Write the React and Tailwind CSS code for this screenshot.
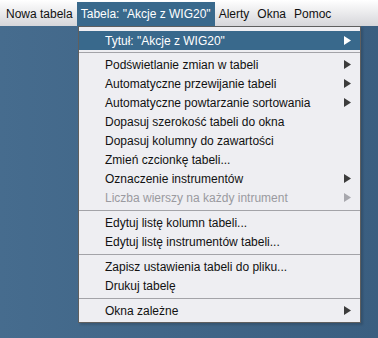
import React from 'react';

const MENU = [
  { label: 'Nowa tabela' },
  { label: 'Tabela: "Akcje z WIG20"', active: true },
  { label: 'Alerty' },
  { label: 'Okna' },
  { label: 'Pomoc' },
];

const ITEMS = [
  { label: 'Tytuł: "Akcje z WIG20"', sub: true, selected: true },
  { sep: true, first: true },
  { label: 'Podświetlanie zmian w tabeli', sub: true },
  { label: 'Automatyczne przewijanie tabeli', sub: true },
  { label: 'Automatyczne powtarzanie sortowania', sub: true },
  { label: 'Dopasuj szerokość tabeli do okna' },
  { label: 'Dopasuj kolumny do zawartości' },
  { label: 'Zmień czcionkę tabeli...' },
  { label: 'Oznaczenie instrumentów', sub: true },
  { label: 'Liczba wierszy na każdy intrument', sub: true, disabled: true },
  { sep: true },
  { label: 'Edytuj listę kolumn tabeli...' },
  { label: 'Edytuj listę instrumentów tabeli...' },
  { sep: true },
  { label: 'Zapisz ustawienia tabeli do pliku...' },
  { label: 'Drukuj tabelę' },
  { sep: true },
  { label: 'Okna zależne', sub: true },
];

function Arrow({ color }) {
  return (
    <svg width="7" height="9" viewBox="0 0 7 9" className="shrink-0">
      <path d="M0 0 L7 4.5 L0 9 Z" fill={color} />
    </svg>
  );
}

export default function App() {
  return (
    <div
      className="relative h-[338px] w-[378px] overflow-hidden text-[12px]"
      style={{ fontFamily: '"Liberation Sans", Arial, sans-serif' }}
    >
      <div className="flex h-[26px] items-end bg-gradient-to-b from-white to-[#d6d6da] pl-[2px]">
        {MENU.map((m) => (
          <div
            key={m.label}
            className={`flex h-[24px] items-center px-1 ${
              m.active ? 'bg-[#39698c] text-white' : 'text-[#111]'
            }`}
          >
            {m.label}
          </div>
        ))}
      </div>
      <div className="h-[312px] bg-gradient-to-r from-[#466c8e] to-[#3a5e80]" />

      <div className="absolute left-[78px] top-[26px] w-[283px] border border-[#5f5f5f] bg-[#eeeef2] pt-[4px] pb-[2px] shadow-[2px_2px_2px_rgba(0,0,0,0.15)]">
        {ITEMS.map((it, i) =>
          it.sep ? (
            <div
              key={i}
              className={`flex items-center ${it.first ? 'h-[5px]' : 'h-[6px]'}`}
            >
              <div className="h-px w-full bg-[#a3a3a8]" />
            </div>
          ) : (
            <div
              key={i}
              className={`flex h-[19px] items-center justify-between pl-[26px] pr-[9px] ${
                it.selected
                  ? 'bg-[#39698c] text-white'
                  : it.disabled
                  ? 'text-[#9a9aa0]'
                  : 'text-[#111]'
              }`}
            >
              <span>{it.label}</span>
              {it.sub && (
                <Arrow
                  color={it.selected ? '#ffffff' : it.disabled ? '#a8a8ae' : '#3c3c3c'}
                />
              )}
            </div>
          ),
        )}
      </div>
    </div>
  );
}
